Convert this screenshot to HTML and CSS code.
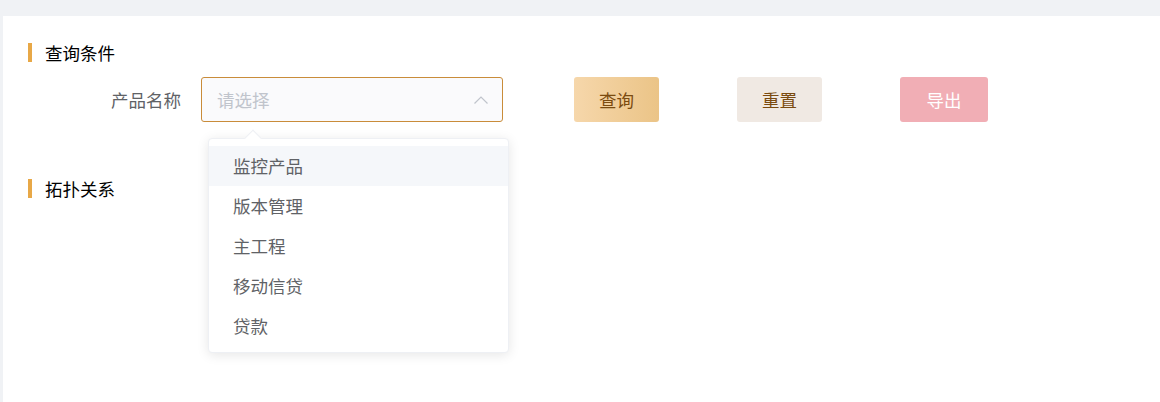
FILE: index.html
```html
<!DOCTYPE html>
<html lang="zh">
<head>
<meta charset="utf-8">
<link rel="stylesheet" href="styles.css">
</head>
<body>
<div class="card">
  <div class="section-title"><span class="bar"></span><span class="title-text">查询条件</span></div>
  <div class="form-row">
    <label class="form-label">产品名称</label>
    <div class="select-wrap">
      <div class="select">
        <span class="placeholder">请选择</span>
        <svg class="chevron" width="14" height="8" viewBox="0 0 14 8"><path d="M0.5 7.5 L7 1 L13.5 7.5" fill="none" stroke="#c0c4cc" stroke-width="1.2"/></svg>
      </div>
      <div class="dropdown">
        <span class="arrow"></span>
        <ul class="options">
          <li class="option hover">监控产品</li>
          <li class="option">版本管理</li>
          <li class="option">主工程</li>
          <li class="option">移动信贷</li>
          <li class="option">贷款</li>
        </ul>
      </div>
    </div>
    <button class="btn btn-query">查询</button>
    <button class="btn btn-reset">重置</button>
    <button class="btn btn-export">导出</button>
  </div>
  <div class="section-title second"><span class="bar"></span><span class="title-text">拓扑关系</span></div>
</div>
</body>
</html>
```
FILE: styles.css
```css
* { box-sizing: border-box; }
html, body { margin: 0; padding: 0; }
body {
  background: #f0f2f5;
  font-family: "Noto Sans CJK SC", "Noto Sans", sans-serif;
  width: 1160px;
  height: 402px;
  overflow: hidden;
}
.card {
  margin: 16px 0 0 3px;
  background: #fff;
  height: 386px;
  padding: 27px 25px 0 25px;
}
.section-title {
  display: flex;
  align-items: center;
  height: 19px;
}
.section-title.second { margin-top: 57px; }
.bar {
  width: 4px;
  height: 19px;
  background: #e8a847;
}
.title-text {
  margin-left: 13px;
  font-size: 17.5px;
  color: #000;
  line-height: 19px;
}
.form-row {
  display: flex;
  align-items: center;
  margin-top: 15px;
  height: 45px;
}
.form-label {
  width: 173px;
  padding-right: 20px;
  text-align: right;
  font-size: 17.5px;
  color: #606266;
}
.select-wrap {
  position: relative;
  width: 302px;
  height: 45px;
}
.select {
  height: 45px;
  border: 1px solid #c98c3a;
  border-radius: 3px;
  background: #fafafc;
  display: flex;
  align-items: center;
  justify-content: space-between;
  padding: 0 14px 0 15px;
}
.placeholder {
  font-size: 17.5px;
  color: #c0c4cc;
}
.chevron { display: block; margin-top: 1px; }
.dropdown {
  position: absolute;
  left: 7px;
  top: 61px;
  width: 301px;
  background: #fff;
  border: 1px solid #eef0f4;
  border-radius: 4px;
  box-shadow: 0 2px 12px rgba(0,0,0,0.1);
  z-index: 10;
}
.arrow {
  position: absolute;
  top: -7px;
  left: 38px;
  width: 12px;
  height: 12px;
  background: #fff;
  border-top: 1px solid #eef0f4;
  border-left: 1px solid #eef0f4;
  transform: rotate(45deg);
}
.options {
  list-style: none;
  margin: 0;
  padding: 7px 0 6px;
  position: relative;
}
.option {
  height: 40px;
  line-height: 40px;
  padding-left: 24px;
  font-size: 17.5px;
  color: #606266;
}
.option.hover { background: #f5f7fa; }
.btn {
  height: 45px;
  border: none;
  border-radius: 3px;
  font-family: inherit;
  font-size: 17.5px;
  padding: 0;
}
.btn-query {
  width: 85px;
  margin-left: 71px;
  background: linear-gradient(90deg, #f6d7ab, #ebc487);
  color: #7b4b10;
}
.btn-reset {
  width: 85px;
  margin-left: 78px;
  background: #f0e9e3;
  color: #7b4b10;
}
.btn-export {
  width: 88px;
  margin-left: 78px;
  background: #f1aeb5;
  color: #fff;
}
```
